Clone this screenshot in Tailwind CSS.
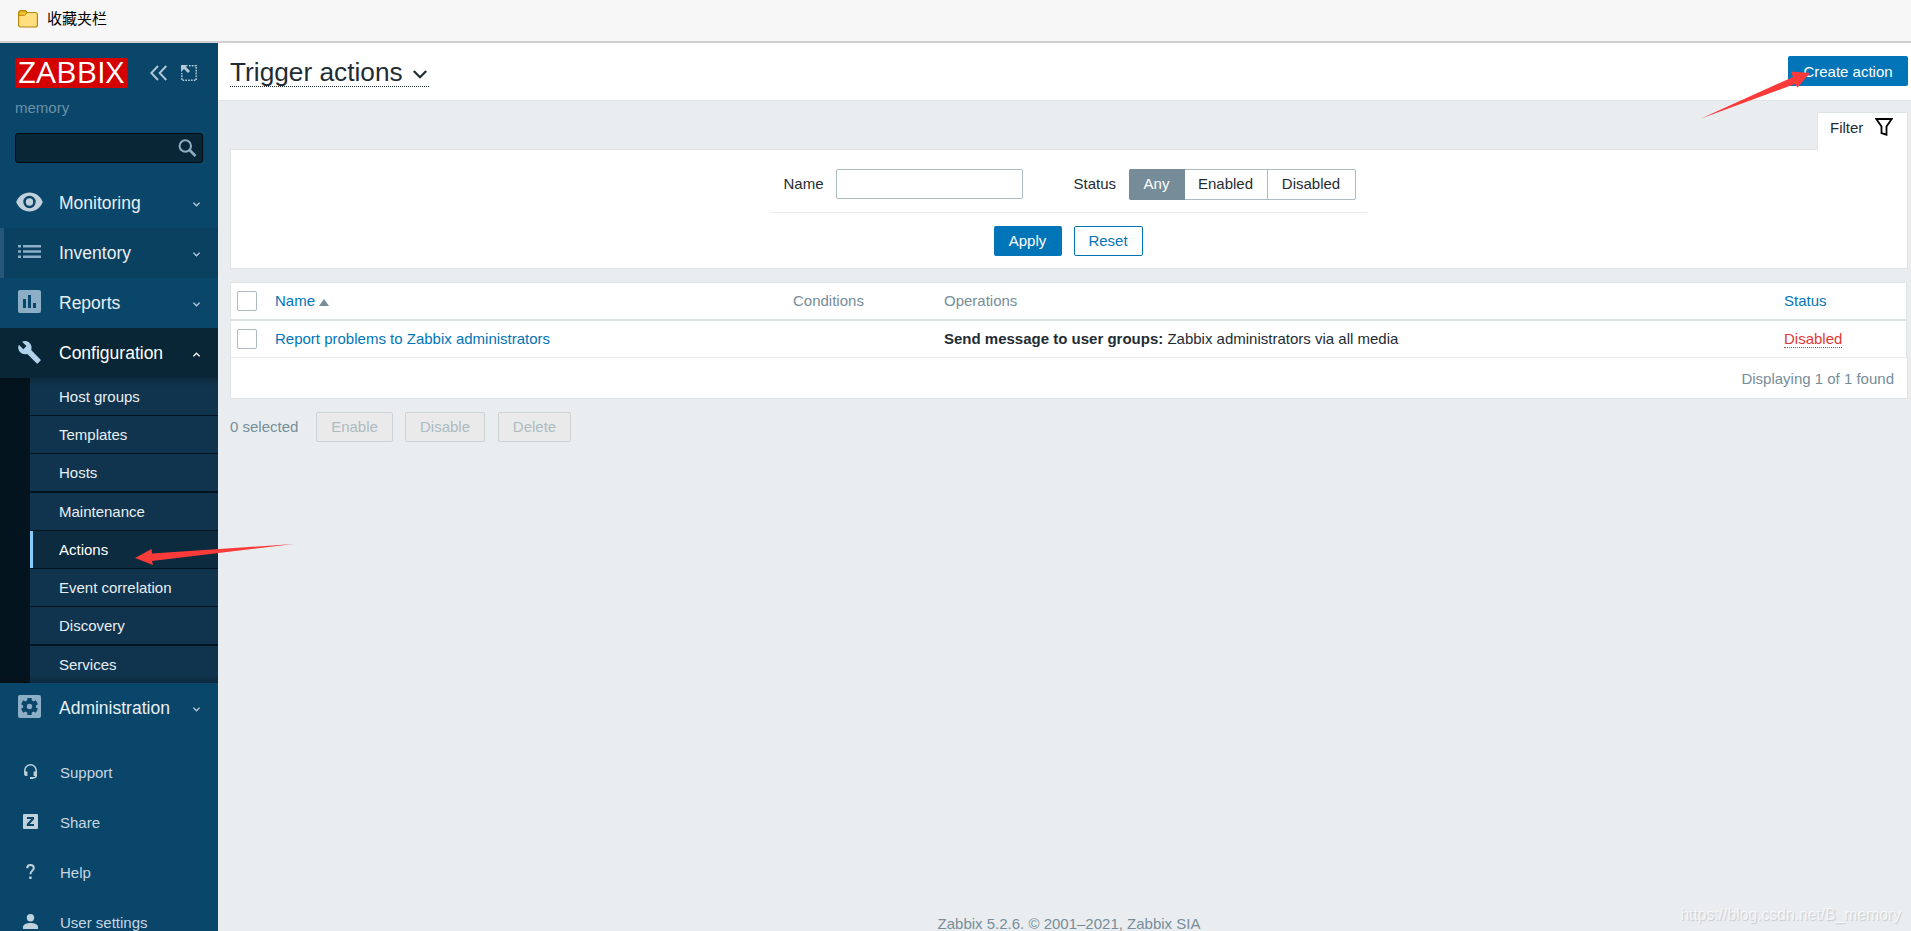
<!DOCTYPE html>
<html lang="en">
  <head>
    <meta charset="utf-8">
    <title>Configuration of actions</title>
    <script src="https://cdn.jsdelivr.net/npm/@tailwindcss/browser@4"></script>
  </head>
  <body class="relative h-[931px] overflow-hidden flex flex-col bg-[#e9edf0] text-[15px] leading-[18px] text-[#1f2c33] font-['Liberation_Sans',Arial,sans-serif]">

    <!-- Bookmarks bar -->
    <div class="h-[43px] shrink-0 flex items-center pl-[18px] pb-1 bg-[#f7f7f7] border-b-2 border-[#d0d0d0]">
      <svg class="w-5 h-[18px]" viewBox="0 0 20 18">
        <path d="M.6 3.5V15a2 2 0 0 0 2 2h14.800a2 2 0 0 0 2-2V4.500a2 2 0 0 0-2-2H9L7.500.7H2.800A2.200 2.200 0 0 0 .6 3z" fill="#ffdf80" stroke="#b8860b" stroke-width="1.200"/>
        <path d="M1 5.500h5.500L9 3 7.300 1H3Q1 1 1 3z" fill="#edc02c" stroke="#b8860b" stroke-width=".8"/>
      </svg>
      <span class="ml-[9px] -mt-[2px] text-[15px] text-black font-['Noto_Sans_CJK_SC',sans-serif]">收藏夹栏</span>
    </div>

    <div class="flex flex-1 min-h-0">

      <!-- Sidebar -->
      <aside class="w-[218px] shrink-0 flex flex-col overflow-hidden bg-[#0a466a]">
        <div class="flex items-center pl-[15px] pt-[15px]">
          <svg class="w-[113px] h-[30px] bg-[#d40000] overflow-visible" viewBox="0 0 113 30">
            <text x="3" y="25" font-size="28.500" fill="#fff" textLength="106" lengthAdjust="spacingAndGlyphs" font-family="Open Sans, sans-serif">ZABBIX</text>
          </svg>
          <svg class="ml-[22px] w-[17px] h-4" viewBox="0 0 17 16" fill="none" stroke="#b4c7d5" stroke-width="1.900"><path d="M8 1L1.300 8 8 15M16.300 1L9.600 8l6.700 7"/></svg>
          <svg class="ml-[14px] w-4 h-4" viewBox="0 0 16 16">
            <path d="M8 .8h7.200v14.400H.8V8" fill="none" stroke="#b4c7d5" stroke-width="1.500" stroke-dasharray="1.700 1.100"/>
            <path d="M0 0h7L5 2l4 4-2 2-4-4-3 3z" fill="#b4c7d5"/>
          </svg>
        </div>
        <div class="pl-[15px] mt-[11px] text-[#6c90a6]">memory</div>
        <div class="mx-[15px] mt-4 h-[30px] shrink-0 flex items-center justify-end pr-[5px] bg-[#092637] border border-[#020a10] rounded-[3px]">
          <svg class="w-[19px] h-[18px]" viewBox="0 0 19 18" fill="none" stroke="#8caec2"><circle cx="7.300" cy="7" r="5.700" stroke-width="2"/><path d="M11.500 11l6 6" stroke-width="2.600"/></svg>
        </div>

        <nav class="mt-[15px] text-[17.500px] text-[#e8eff4]">
          <a class="h-[50px] flex items-center pl-4">
            <svg class="w-[27px] h-5 -mt-[2px]" viewBox="0 0 27 20"><path d="M13.500.5C7.500.5 2.400 4.300.2 10c2.200 5.700 7.300 9.500 13.300 9.500s11.100-3.800 13.300-9.500C24.600 4.300 19.500.5 13.500.5zm0 15.700a6.200 6.200 0 1 1 0-12.400 6.200 6.200 0 0 1 0 12.400zm0-9.900a3.700 3.700 0 1 0 0 7.400 3.700 3.700 0 0 0 0-7.400z" fill="#c0d1dc"/></svg>
            <span class="ml-4 flex-1">Monitoring</span>
            <svg class="mr-[18px] mt-[3px] w-[7px] h-[5px]" viewBox="0 0 7 5" fill="none" stroke="#b4c7d5" stroke-width="1.400"><path d="M.4.7l3.100 3.100L6.600.7"/></svg>
          </a>
          <a class="h-[50px] flex items-center pl-[14px] bg-[#0a4060] border-l-4 border-[#26567a]">
            <svg class="w-[23px] h-[13px] -mt-[3px]" viewBox="0 0 23 13" fill="#8caec6"><path d="M0 0h3v2.500H0zM5 0h18v2.500H5zM0 5.200h3v2.600H0zM5 5.200h18v2.600H5zM0 10.500h3V13H0zM5 10.500h18V13H5z"/></svg>
            <span class="ml-[18px] flex-1">Inventory</span>
            <svg class="mr-[18px] mt-[3px] w-[7px] h-[5px]" viewBox="0 0 7 5" fill="none" stroke="#b4c7d5" stroke-width="1.400"><path d="M.4.7l3.100 3.100L6.600.7"/></svg>
          </a>
          <a class="h-[50px] flex items-center pl-[18px]">
            <svg class="w-[23px] h-[23px] -mt-[3px]" viewBox="0 0 23 23"><rect width="23" height="23" rx="2" fill="#8caec6"/><path d="M5 9h3v9H5zM10 5h3v13h-3zM15 13h3v5h-3z" fill="#0a466a"/></svg>
            <span class="ml-[18px] flex-1">Reports</span>
            <svg class="mr-[18px] mt-[3px] w-[7px] h-[5px]" viewBox="0 0 7 5" fill="none" stroke="#b4c7d5" stroke-width="1.400"><path d="M.4.7l3.100 3.100L6.600.7"/></svg>
          </a>
          <a class="h-[50px] flex items-center pl-[18px] bg-[#092637] text-white">
            <svg class="w-[23px] h-[23px] -mt-[2px]" viewBox="1 1 22 22.500"><path d="M22.700 19l-9.100-9.100c.9-2.300.4-5-1.500-6.900-2-2-5-2.400-7.400-1.300L9 6 6 9 1.600 4.700C.4 7.100.9 10.100 2.900 12.100c1.900 1.900 4.600 2.400 6.900 1.500l9.100 9.100c.4.4 1 .4 1.400 0l2.300-2.300c.5-.4.500-1.100.1-1.400z" fill="#b0d2ea"/></svg>
            <span class="ml-[18px] flex-1">Configuration</span>
            <svg class="mr-[18px] mt-[3px] w-[7px] h-[5px]" viewBox="0 0 7 5" fill="none" stroke="#fff" stroke-width="1.400"><path d="M.4 4.300l3.100-3.100 3.100 3.100"/></svg>
          </a>

          <div class="relative pl-[30px] flex flex-col gap-px bg-[#04141e] text-[15px]">
            <a class="h-[37px] flex items-center pl-[29px] bg-[#10344d]">Host groups</a>
            <a class="h-[37px] flex items-center pl-[29px] bg-[#10344d]">Templates</a>
            <a class="h-[37px] flex items-center pl-[29px] bg-[#10344d]">Hosts</a>
            <a class="mt-px h-[37px] flex items-center pl-[29px] bg-[#10344d]">Maintenance</a>
            <a class="h-[37px] flex items-center pl-[26px] bg-[#0c2b3f] border-l-3 border-[#85ccfb] text-white">Actions</a>
            <a class="h-[37px] flex items-center pl-[29px] bg-[#10344d]">Event correlation</a>
            <a class="h-[37px] flex items-center pl-[29px] bg-[#10344d]">Discovery</a>
            <a class="mt-px h-[37px] flex items-center pl-[29px] bg-[#10344d]">Services</a>
            <div class="absolute inset-x-0 top-0 h-2 bg-linear-to-b from-black/20 to-transparent"></div>
            <div class="absolute inset-x-0 bottom-0 h-2 bg-linear-to-t from-black/20 to-transparent"></div>
          </div>

          <a class="h-[50px] flex items-center pl-[18px]">
            <svg class="w-[23px] h-[23px] -mt-[3px]" viewBox="0 0 23 23"><rect width="23" height="23" rx="2" fill="#8caec6"/>
              <g fill="#0a466a"><circle cx="11.500" cy="11.500" r="6.500"/><path d="M9.300 3h4.400v17H9.300z"/><path d="M9.300 3h4.400v17H9.300z" transform="rotate(60 11.500 11.500)"/><path d="M9.300 3h4.400v17H9.300z" transform="rotate(120 11.500 11.500)"/></g>
              <circle cx="11.500" cy="11.500" r="2.700" fill="#8caec6"/>
            </svg>
            <span class="ml-[18px] flex-1">Administration</span>
            <svg class="mr-[18px] mt-[3px] w-[7px] h-[5px]" viewBox="0 0 7 5" fill="none" stroke="#b4c7d5" stroke-width="1.400"><path d="M.4.7l3.100 3.100L6.600.7"/></svg>
          </a>
        </nav>

        <nav class="mt-[15px] text-[#c8d7e1]">
          <a class="h-[50px] flex items-center pl-[23px]">
            <svg class="w-[15px] h-[15px] -mt-[3px]" viewBox="0 0 15 15"><path d="M1.800 9V6.400a5.700 5.600 0 0 1 11.400 0V11.500q0 2.300-2.400 2.300H8" fill="none" stroke="#c0d1dc" stroke-width="1.500"/><path d="M1.100 7.500h3.300V12H3q-1.900 0-1.900-1.800zM10.600 7.500h3.300v3q0 1.500-1.800 1.500h-1.500zM7 13h3v2H7z" fill="#c0d1dc"/></svg>
            <span class="ml-[22px]">Support</span>
          </a>
          <a class="h-[50px] flex items-center pl-[23px]">
            <svg class="w-[15px] h-[15px] -mt-[3px]" viewBox="0 0 15 15"><rect width="15" height="15" rx="1" fill="#c0d1dc"/><path d="M4 3h7v2.200L6.700 10H11v2H3.800V9.900L8.200 5H4z" fill="#0a466a"/></svg>
            <span class="ml-[22px]">Share</span>
          </a>
          <a class="h-[50px] flex items-center pl-[23px]">
            <svg class="w-[15px] h-[15px] -mt-[3px]" viewBox="0 0 15 15"><path d="M4.200 4.200C4.200 2 5.500 1 7.400 1s3.400 1 3.400 2.900c0 2.600-3.400 3-3.400 6.300" fill="none" stroke="#c0d1dc" stroke-width="2"/><path d="M6.200 12.500h2.400V15H6.200z" fill="#c0d1dc"/></svg>
            <span class="ml-[22px]">Help</span>
          </a>
          <a class="h-[50px] flex items-center pl-[23px]">
            <svg class="w-[15px] h-[15px] -mt-[3px]" viewBox="0 0 15 15" fill="#c0d1dc"><circle cx="7.500" cy="3.700" r="3.700"/><path d="M0 15v-2.200C0 10.300 4 9 7.500 9s7.500 1.300 7.500 3.800V15z"/></svg>
            <span class="ml-[22px]">User settings</span>
          </a>
        </nav>
      </aside>

      <!-- Content -->
      <main class="flex-1 min-w-0 flex flex-col">
        <header class="h-[58px] shrink-0 flex items-start justify-between pl-3 pr-[3px] pt-[13px] bg-white border-b border-[#dfe4e7]">
          <h1 class="h-[31px] w-[199px] flex items-center justify-between border-b border-dotted border-[#1f2c33] text-[26.250px] leading-[30px]">
            <span class="mt-[2px] whitespace-nowrap">Trigger actions</span>
            <svg class="mr-[2px] mt-[7px] w-[14px] h-[9px]" viewBox="0 0 14 9" fill="none" stroke="#1f2c33" stroke-width="2.200"><path d="M.8 1L7 7.200 13.200 1"/></svg>
          </h1>
          <button class="w-[120px] h-[30px] pt-px rounded-[2px] bg-[#0275b8] text-white">Create action</button>
        </header>

        <div class="pl-3 pr-[3px] pt-[11px]">
          <div class="flex justify-end">
            <div class="relative z-10 -mb-px w-[91px] h-[38px] flex pl-[12px] pt-[5px] bg-white border border-b-0 border-[#dfe4e7] rounded-t-[2px]">
              <span class="mt-px">Filter</span>
              <svg class="ml-[12px] w-[18px] h-[18px]" viewBox="0 0 18 18" fill="none" stroke="#000" stroke-width="1.800"><path d="M1.300 1h15.400l-5.200 7.500v8.200l-5-1.700V8.500z"/></svg>
            </div>
          </div>

          <form class="h-[120px] flex flex-col items-center pt-[19px] pr-[2px] bg-white border border-[#dfe4e7]">
            <div class="w-[597px] h-[44px] flex items-start pl-[14px] border-b border-[#e8ecee]">
              <label class="mt-[6px] w-[52px]">Name</label>
              <input type="text" class="w-[187px] h-[30px] border border-[#acbbc2] rounded-[2px]">
              <label class="ml-[51px] mt-[6px] w-[55px]">Status</label>
              <div class="h-[31px] w-[227px] flex border border-[#acbbc2] rounded-[2px] text-center leading-[28px]">
                <span class="-m-px mr-0 w-[56px] h-[31px] leading-[30px] rounded-l-[2px] bg-[#768d99] text-white">Any</span>
                <span class="w-[83px] border-r border-[#acbbc2]">Enabled</span>
                <span class="flex-1">Disabled</span>
              </div>
            </div>
            <div class="flex gap-3 mt-[13px]">
              <button type="button" class="w-[68px] h-[30px] rounded-[2px] bg-[#0275b8] text-white">Apply</button>
              <button type="button" class="w-[69px] h-[30px] rounded-[2px] border border-[#0275b8] text-[#0275b8]">Reset</button>
            </div>
          </form>

          <table class="mt-[13px] w-[1677px] table-fixed border-separate border-spacing-0 bg-white text-left border border-b-0 border-[#dfe4e7]">
            <thead>
              <tr class="h-[38px] text-[#768d99]">
                <th class="w-[44px] pl-[6px] border-b-2 border-[#dce2e5]"><span class="block w-5 h-5 border border-[#acbbc2] rounded-[2px]"></span></th>
                <th class="w-[518px] font-normal text-[#0275b8] border-b-2 border-[#dce2e5]">Name <span class="inline-block border-x-5 border-x-transparent border-b-[7px] border-b-[#768d99]"></span></th>
                <th class="w-[151px] font-normal border-b-2 border-[#dce2e5]">Conditions</th>
                <th class="w-[840px] font-normal border-b-2 border-[#dce2e5]">Operations</th>
                <th class="font-normal text-[#0275b8] border-b-2 border-[#dce2e5]">Status</th>
              </tr>
            </thead>
            <tbody>
              <tr class="h-[37px]">
                <td class="pl-[6px] border-b border-[#e8ecee]"><span class="block w-5 h-5 border border-[#acbbc2] rounded-[2px]"></span></td>
                <td class="text-[#0275b8] border-b border-[#e8ecee]">Report problems to Zabbix administrators</td>
                <td class="border-b border-[#e8ecee]"></td>
                <td class="border-b border-[#e8ecee]"><b>Send message to user groups:</b> Zabbix administrators via all media</td>
                <td class="border-b border-[#e8ecee]"><span class="text-[#e33734] border-b border-dotted border-[#e33734]">Disabled</span></td>
              </tr>
            </tbody>
          </table>
          <div class="h-[41px] flex items-center justify-end pt-[2px] pr-[13px] bg-white border border-t-0 border-[#dfe4e7] text-[#768d99]">Displaying 1 of 1 found</div>

          <div class="mt-[13px] flex items-center text-[#768d99]">
            <span class="w-[86px]">0 selected</span>
            <button class="w-[77px] h-[30px] bg-[#eaeaea] border border-[#ccd3d7] rounded-[2px] text-[#acbbc2]" disabled>Enable</button>
            <button class="ml-3 w-[80px] h-[30px] bg-[#eaeaea] border border-[#ccd3d7] rounded-[2px] text-[#acbbc2]" disabled>Disable</button>
            <button class="ml-[13px] w-[73px] h-[30px] bg-[#eaeaea] border border-[#ccd3d7] rounded-[2px] text-[#acbbc2]" disabled>Delete</button>
          </div>
        </div>

        <footer class="mt-auto -mb-[2px] pl-[9px] text-center text-[#768d99]">Zabbix 5.2.6. © 2001–2021, Zabbix SIA</footer>
      </main>
    </div>

    <!-- Annotations -->
    <svg class="absolute inset-0 z-20 w-[1911px] h-[931px] pointer-events-none" viewBox="0 0 1911 931" fill="#fb3a3a">
      <path d="M135 558l16.500-9 .5 4.500 142-9.500-142 17 1 4z"/>
      <path d="M1810 73l-19-1.500 2 5.500-92 41.500 94-34.500 2.500 3.500z"/>
    </svg>
    <div class="absolute z-20 right-[10px] bottom-[7px] text-[15.700px] text-white/70 [text-shadow:1px_1px_1px_rgba(0,0,0,0.15)]">https://blog.csdn.net/B_memory</div>

  </body>
</html>
